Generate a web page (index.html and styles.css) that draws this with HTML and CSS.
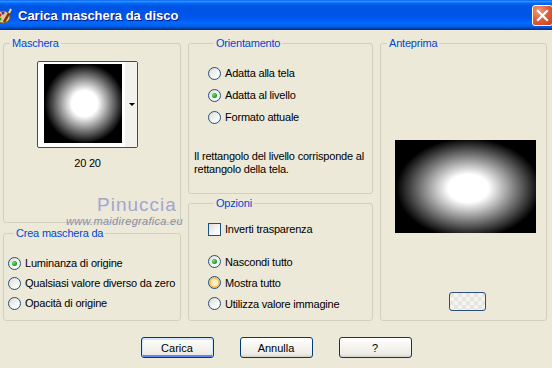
FILE: index.html
```html
<!DOCTYPE html>
<html lang="it">
<head>
    <meta charset="UTF-8">
    <title>Carica maschera da disco</title>
    <link rel="stylesheet" href="styles.css">
</head>
<body>
    <div class="window">
        <div class="titlebar">
            <svg class="app-icon" width="14" height="18" viewBox="0 0 14 18">
                <ellipse cx="5" cy="10" rx="7" ry="6" fill="#E8C890" stroke="#8A5A20" stroke-width="1"/>
                <circle cx="2" cy="8" r="1.5" fill="#D02020"/>
                <circle cx="5" cy="6" r="1.5" fill="#2040D0"/>
                <circle cx="2" cy="12" r="1.5" fill="#20A020"/>
                <path d="M6 15 L13 3" stroke="#7A3A10" stroke-width="2.5"/>
                <path d="M11 6 L13 2" stroke="#F0E0B0" stroke-width="2"/>
            </svg>
            <span class="title">Carica maschera da disco</span>
            <div class="close-btn">
                <svg width="19" height="19" viewBox="0 0 19 19">
                    <path d="M5 5 L14 14 M14 5 L5 14" stroke="#fff" stroke-width="2.2" stroke-linecap="square"/>
                </svg>
            </div>
        </div>

        <div class="dialog">
            <div class="groups">
                <div class="col col-left">
                    <fieldset class="group group-mask">
                        <legend>Maschera</legend>
                        <div class="mask-picker">
                            <div class="mask-thumb"></div>
                            <div class="mask-drop"><span class="arrow"></span></div>
                        </div>
                        <div class="mask-size">20 20</div>
                    </fieldset>
                    <fieldset class="group group-source">
                        <legend>Crea maschera da</legend>
                        <div class="opt"><span class="radio checked"></span>Luminanza di origine</div>
                        <div class="opt"><span class="radio"></span>Qualsiasi valore diverso da zero</div>
                        <div class="opt"><span class="radio"></span>Opacità di origine</div>
                    </fieldset>
                </div>

                <div class="col col-mid">
                    <fieldset class="group group-orient">
                        <legend>Orientamento</legend>
                        <div class="opt"><span class="radio"></span>Adatta alla tela</div>
                        <div class="opt"><span class="radio checked"></span>Adatta al livello</div>
                        <div class="opt"><span class="radio"></span>Formato attuale</div>
                        <p class="note">Il rettangolo del livello corrisponde al<br>rettangolo della tela.</p>
                    </fieldset>
                    <fieldset class="group group-options">
                        <legend>Opzioni</legend>
                        <div class="opt"><span class="check"></span>Inverti trasparenza</div>
                        <div class="opt-list">
                            <div class="opt"><span class="radio checked"></span>Nascondi tutto</div>
                            <div class="opt"><span class="radio hover"></span>Mostra tutto</div>
                            <div class="opt"><span class="radio"></span>Utilizza valore immagine</div>
                        </div>
                    </fieldset>
                </div>

                <div class="col col-right">
                    <fieldset class="group group-preview">
                        <legend>Anteprima</legend>
                        <div class="preview"></div>
                        <div class="mini-btn"></div>
                    </fieldset>
                </div>
            </div>

            <div class="buttons">
                <button class="btn btn-default">Carica</button>
                <button class="btn">Annulla</button>
                <button class="btn">?</button>
            </div>

            <div class="watermark">
                <div class="wm-name">Pinuccia</div>
                <div class="wm-site">www.maidiregrafica.eu</div>
            </div>
        </div>
    </div>
</body>
</html>
```

FILE: styles.css
```css
body {
    margin: 0;
    font-family: "Liberation Sans", Arial, sans-serif;
    font-size: 11px;
    letter-spacing: -0.2px;
    color: #000;
    background: #ECE9D8;
}

.window {
    width: 552px;
    height: 368px;
    overflow: hidden;
    background: #ECE9D8;
}

/* title bar */
.titlebar {
    height: 30px;
    display: flex;
    align-items: center;
    background: linear-gradient(to bottom,
        #0058EE 0%, #3593FF 4%, #288EFF 6%, #127DFF 8%, #036FFC 10%,
        #0262EE 14%, #0057E5 20%, #0054E3 24%, #0055EB 56%, #005BF5 66%,
        #026AFE 76%, #0062EF 86%, #0052D6 92%, #0040AB 94%, #003092 100%);
}

.app-icon {
    margin-left: -2px;
    margin-top: 1px;
    flex: none;
}

.title {
    margin-left: 6px;
    color: #fff;
    font-weight: bold;
    font-size: 13px;
    letter-spacing: 0;
    text-shadow: 1px 1px 0 #0A1883;
    flex: 1;
}

.close-btn {
    width: 21px;
    height: 21px;
    box-sizing: border-box;
    margin-right: -1px;
    border: 1px solid #fff;
    border-radius: 3px;
    background: radial-gradient(circle at 30% 25%, #F29A7E 0%, #E2603C 45%, #C6401F 100%);
    display: flex;
    align-items: center;
    justify-content: center;
}

/* dialog body */
.dialog {
    position: relative;
}

.groups {
    display: flex;
    gap: 7px;
    padding: 7px 5px 0 3px;
}

.col {
    display: flex;
    flex-direction: column;
}

.col-left { width: 178px; gap: 4px; }
.col-mid { width: 185px; gap: 3px; }
.col-right { width: 167px; }

.group {
    margin: 0;
    padding: 0;
    min-width: 0;
    box-sizing: border-box;
    border: 1px solid #D0D0BF;
    border-radius: 3px;
}

.group legend {
    margin-left: 6px;
    padding: 0 2px;
    color: #0046D5;
    line-height: 13px;
}

.group-mask { height: 186px; }
.group-source { height: 94px; padding: 13px 0 0 4px; }
.group-orient { height: 157px; padding: 12px 0 0 19px; }
.group-options { height: 124px; padding: 9px 0 0 19px; }
.group-preview { height: 284px; }

/* mask picker */
.mask-picker {
    width: 101px;
    height: 87px;
    box-sizing: border-box;
    margin: 11px 0 0 33px;
    border: 1px solid #2B4F85;
    border-radius: 2px;
    background: #fff;
    display: flex;
    padding: 2px 0 0 6px;
}

.mask-thumb {
    width: 78px;
    height: 79px;
    background: radial-gradient(circle at 52% 50%, #fff 0, #fff 13px, #000 40px);
}

.mask-drop {
    margin-left: 3px;
    margin-top: -2px;
    width: 12px;
    height: 85px;
    background: #F2F1EC;
    display: flex;
    align-items: center;
    justify-content: center;
}

.arrow {
    width: 0;
    height: 0;
    margin-left: 2px;
    border-left: 3px solid transparent;
    border-right: 3px solid transparent;
    border-top: 3px solid #000;
}

.mask-size {
    width: 101px;
    margin: 9px 0 0 33px;
    text-align: center;
    line-height: 13px;
}

/* options */
.opt {
    display: flex;
    align-items: center;
    gap: 4px;
    height: 20px;
    white-space: nowrap;
}

.group-orient .opt { height: 22px; }
.opt-list { margin-top: 12px; }
.opt-list .opt { height: 21px; }

.radio {
    width: 13px;
    height: 13px;
    flex: none;
    position: relative;
    box-sizing: border-box;
    border: 1px solid #1C5180;
    border-radius: 50%;
    background: linear-gradient(135deg, #DCDCD7 0%, #F6F6F4 60%, #fff 100%);
}

.radio.checked::after {
    content: '';
    position: absolute;
    left: 3px;
    top: 3px;
    width: 5px;
    height: 5px;
    border-radius: 50%;
    background: radial-gradient(circle at 35% 35%, #6FE26B 0%, #21A121 60%, #1A841A 100%);
}

.radio.hover {
    box-shadow: inset 0 0 0 2px #F9C25A;
    background: linear-gradient(135deg, #F7E3AE 0%, #FFF6DC 100%);
}

.check {
    width: 13px;
    height: 13px;
    flex: none;
    box-sizing: border-box;
    border: 1px solid #1C5180;
    background: linear-gradient(135deg, #DCDCD7 0%, #F6F6F4 60%, #fff 100%);
}

.note {
    margin: 22px 0 0 -14px;
    line-height: 13px;
    white-space: nowrap;
}

/* preview */
.preview {
    width: 141px;
    height: 93px;
    margin: 90px 0 0 14px;
    background: radial-gradient(ellipse 72px 50px at 52% 52%, #fff 0%, #fff 28%, #000 100%);
}

.mini-btn {
    width: 37px;
    height: 19px;
    box-sizing: border-box;
    margin: 59px 0 0 68px;
    border: 1px solid #2B4F85;
    border-radius: 3px;
    background:
        repeating-conic-gradient(#F4F3EE 0 25%, #E6E5E0 0 50%) 0 0 / 8px 8px;
}

/* bottom buttons */
.buttons {
    display: flex;
    justify-content: center;
    gap: 26px;
    margin-top: 16px;
}

.btn {
    width: 73px;
    height: 21px;
    padding: 0;
    box-sizing: border-box;
    border: 1px solid #003C74;
    border-radius: 3px;
    background: linear-gradient(to bottom, #fff 0%, #F5F4EF 45%, #ECEBE6 85%, #D6D0C5 100%);
    font-family: "Liberation Sans", Arial, sans-serif;
    font-size: 11px;
    color: #000;
}

.btn-default {
    box-shadow: inset 0 1px 0 1px #CEE7FF, inset 0 -1px 0 1px #6982EE;
}

/* watermark over the left column */
.watermark {
    position: absolute;
    left: 66px;
    top: 164px;
    pointer-events: none;
}

.wm-name {
    margin-left: 31px;
    font-size: 19px;
    line-height: 21px;
    letter-spacing: 1px;
    color: #A6A6C4;
    text-shadow: 1px 1px 0 #E8E8F0;
}

.wm-site {
    font-size: 11px;
    line-height: 12px;
    letter-spacing: 0.3px;
    font-style: italic;
    color: #8C8CA8;
}
```
